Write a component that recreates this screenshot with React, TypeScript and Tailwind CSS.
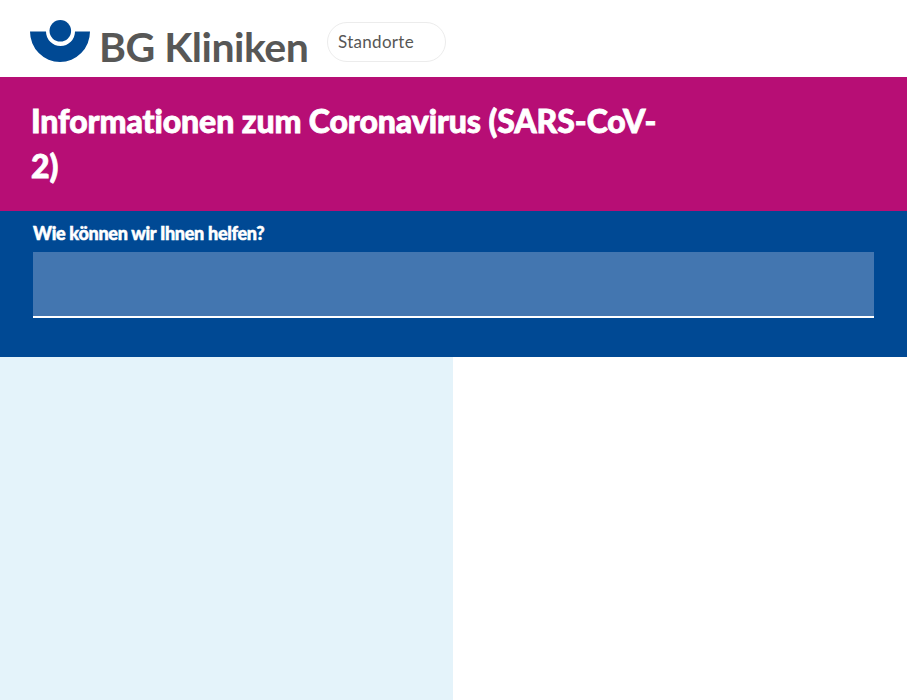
const Logo = () => (
  <svg width="60" height="42" viewBox="0 0 60 42" className="shrink-0">
    <path d="M0 11.500H16A14.500 14.500 0 0 0 45 11.500H60A30 30.500 0 0 1 0 11.500Z" fill="#004994" />
    <circle cx="30.300" cy="10.800" r="10.800" fill="#004994" />
  </svg>
);

export default function App() {
  return (
    <div className="min-h-[700px] bg-white font-['Lato','Liberation_Sans',sans-serif]">
      <header className="h-[77px] flex items-start pl-[30px] pt-[20px]">
        <Logo />
        <span className="ml-[9px] mt-[4px] w-[209px] text-[41px] leading-[46px] font-bold text-[#575756] tracking-[-0.5px] whitespace-nowrap">
          BG Kliniken
        </span>
        <button className="ml-[19px] mt-[2px] w-[119px] h-[40px] rounded-[20px] border border-[#ececec] pl-[10px] text-left text-[17px] tracking-[0.3px] text-[#575756]">
          Standorte
        </button>
      </header>

      <section className="bg-[#b70e75] h-[134px] pl-[31px] pt-[21px]">
        <h1 className="w-[640px] text-[32px] leading-[45px] font-black tracking-[-0.1px] [-webkit-text-stroke:0.8px_white] text-white">
          Informationen zum Coronavirus (SARS-CoV-2)
        </h1>
      </section>

      <section className="bg-[#004994] h-[146px] px-[33px] pt-[10px]">
        <label className="block text-[18px] leading-[24px] font-black tracking-[-0.3px] [-webkit-text-stroke:0.5px_white] text-white">
          Wie können wir Ihnen helfen?
        </label>
        <div className="mt-[7px] h-[66px] bg-[#4376b0] border-b-2 border-white" />
      </section>

      <div className="grid grid-cols-[453px_1fr] h-[343px]">
        <div className="bg-[#e4f3fa]" />
        <div className="bg-white" />
      </div>
    </div>
  );
}
